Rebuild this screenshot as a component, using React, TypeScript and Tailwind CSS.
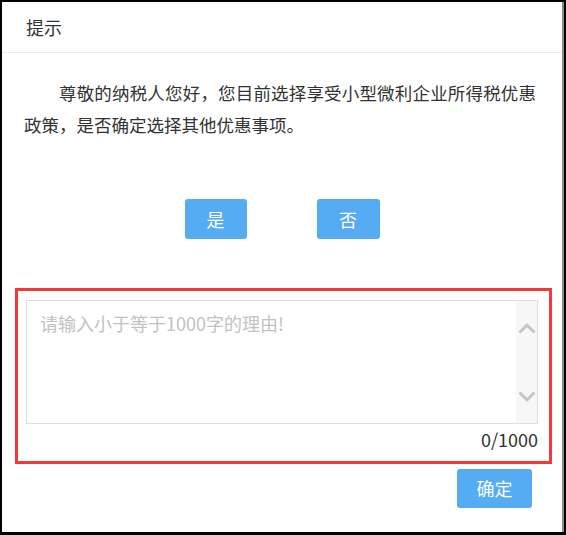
import React from "react";

const font = { fontFamily: '"Noto Sans CJK SC", "Microsoft YaHei", sans-serif' };

function ChevronUp() {
  return (
    <svg width="18" height="11" viewBox="0 0 18 11">
      <path d="M1.5 9.5 L9 2.2 L16.5 9.5" fill="none" stroke="#c6c6c6" strokeWidth="3" />
    </svg>
  );
}
function ChevronDown() {
  return (
    <svg width="18" height="11" viewBox="0 0 18 11">
      <path d="M1.5 1.5 L9 8.8 L16.5 1.5" fill="none" stroke="#c6c6c6" strokeWidth="3" />
    </svg>
  );
}

export default function App() {
  return (
    <div className="w-[566px] h-[535px] bg-black pt-[2px] pl-[2px]" style={font}>
      <div className="w-[562px] h-[530px] bg-white border-r-2 border-[#8a8a8a] flex flex-col">
        <div className="h-[51px] border-b border-[#ebebeb] flex items-center pl-[24px] text-[18px] text-[#333]">
          提示
        </div>
        <div className="pt-[24px] pl-[22px] pr-[26px]">
          <p className="text-[17.5px] leading-[32px] text-[#333] indent-[2em] text-justify">
            尊敬的纳税人您好，您目前选择享受小型微利企业所得税优惠政策，是否确定选择其他优惠事项。
          </p>
        </div>
        <div className="flex justify-center gap-[70px] mt-[58px]">
          <button className="w-[62px] h-[40px] rounded-[3px] bg-[#55acf2] text-white text-[18px]">是</button>
          <button className="w-[63px] h-[40px] rounded-[3px] bg-[#55acf2] text-white text-[18px]">否</button>
        </div>
        <div className="ml-[13px] mt-[49px] w-[537px] h-[176px] border-[3px] border-[#f53838] pl-[8px] pr-[11px] pt-[9px]">
          <div className="h-[124px] border border-[#dedede] flex">
            <div className="flex-1 pl-[13px] pt-[10px] text-[18px] leading-[24px] text-[#c2c2c2]">
              请输入小于等于1000字的理由!
            </div>
            <div className="w-[21px] bg-[#f7f7f7] flex flex-col items-center justify-between pt-[22px] pb-[21px]">
              <ChevronUp />
              <ChevronDown />
            </div>
          </div>
          <div className="text-right text-[18px] leading-[26px] text-[#333] mt-[2px]">0/1000</div>
        </div>
        <div className="flex justify-end pr-[30px] mt-[5px]">
          <button className="w-[75px] h-[39px] rounded-[3px] bg-[#55acf2] text-white text-[18px]">确定</button>
        </div>
      </div>
    </div>
  );
}
